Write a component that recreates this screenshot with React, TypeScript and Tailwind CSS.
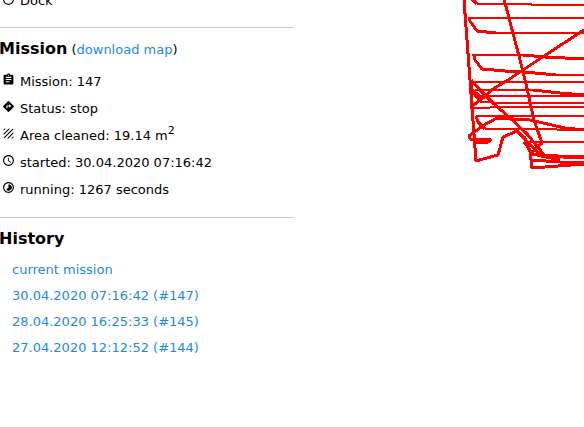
import type { ReactNode } from 'react'
import { MdAssignment, MdDirections, MdTexture, MdAccessTime, MdTimelapse, MdRadioButtonUnchecked } from 'react-icons/md'

const MISSIONS = ['30.04.2020 07:16:42 (#147)', '28.04.2020 16:25:33 (#145)', '27.04.2020 12:12:52 (#144)']

// turns and sloped runs
const TURNS = [
  '464,0 470,80 476,161 498,155 503,137 517,131 525,138 530,152 532,168 584,164',
  '472,-1 477,4',
  '469,17 470,21 477,31 496,33',
  '504,-1 520,60 526,84 534,120 542,143 532,152',
  '584,30 544,56 508,80 493,89 484,97 471,107',
  '474,54 475,60 482,69 505,71 525,72 556,75',
  '523,55 545,57 584,59',
  '471,80 480,90 493,103 510,118 527,134 545,156',
  '471,82 471,90 480,101',
  '472,90 481,97',
  '533,90 560,93 584,95',
  '476,116 478,122 485,129',
  '584,130 565,128 530,120 497,118 484,125 469,136 470,139 491,140 488,142 473,143',
  '524,142 533,154 560,160',
  '517,131 541,156 584,158',
  '532,160 560,162 584,162',
]

// straight cleaning lanes
const LANES = [
  '477,4 531,4 532,5 584,5',
  '469,18 584,18',
  '496,33 584,33',
  '472,55 523,55',
  '556,75 584,75',
  '471,82 584,82',
  '475,90 533,90',
  '480,96 584,96',
  '480,102 503,103 584,103',
  '470,108 510,107 584,107',
  '476,116 584,116',
  '485,129 530,129 584,130',
  '524,142 584,142',
  '532,155 584,156',
]

function Row({ icon, children }: { icon: ReactNode; children: ReactNode }) {
  return (
    <li className="flex h-[27px] items-center gap-[5px] pl-[2px]">
      <span className="mb-1 text-[13px]">{icon}</span>
      <span className="whitespace-nowrap">{children}</span>
    </li>
  )
}

function TrackMap() {
  return (
    <svg viewBox="460 0 124 175" width="124" height="175" className="shrink-0" shapeRendering="crispEdges" fill="none" stroke="#ff0000" strokeLinejoin="round">
      <g strokeWidth="3">
        {TURNS.map(points => <polyline key={points} points={points} />)}
      </g>
      <g strokeWidth="2">
        {LANES.map(points => <polyline key={points} points={points} />)}
      </g>
    </svg>
  )
}

export default function App() {
  return (
    <div className="flex items-start justify-between overflow-hidden bg-white font-['Verdana','DejaVu_Sans',sans-serif] text-[13px] leading-5 text-black">
      <main className="w-[294px] shrink-0">
        <ul className="flex h-7 flex-col justify-end overflow-hidden border-b border-[#cccccc] pb-4">
          <Row icon={<MdRadioButtonUnchecked />}>Dock</Row>
        </ul>

        <section className="border-b border-[#cccccc] pt-[9px] pb-[14px]">
          <h2 className="-ml-px mb-[6px] leading-6">
            <span className="text-base font-bold">Mission</span> (<a href="#map" className="text-[#1e88e5]">download map</a>)
          </h2>
          <ul>
            <Row icon={<MdAssignment />}>Mission: 147</Row>
            <Row icon={<MdDirections />}>Status: stop</Row>
            <Row icon={<MdTexture />}>Area cleaned: 19.14 m<sup className="text-[11px]">2</sup></Row>
            <Row icon={<MdAccessTime />}>started: 30.04.2020 07:16:42</Row>
            <Row icon={<MdTimelapse />}>running: 1267 seconds</Row>
          </ul>
        </section>

        <section className="pt-[9px]">
          <h2 className="-ml-px mb-[6px] text-base leading-6 font-bold">History</h2>
          <ul className="pl-3 leading-[26px] text-[#1e88e5]">
            <li><a href="#current">current mission</a></li>
            {MISSIONS.map(mission => (
              <li key={mission}><a href="#mission">{mission}</a></li>
            ))}
          </ul>
        </section>
      </main>
      <TrackMap />
    </div>
  )
}
